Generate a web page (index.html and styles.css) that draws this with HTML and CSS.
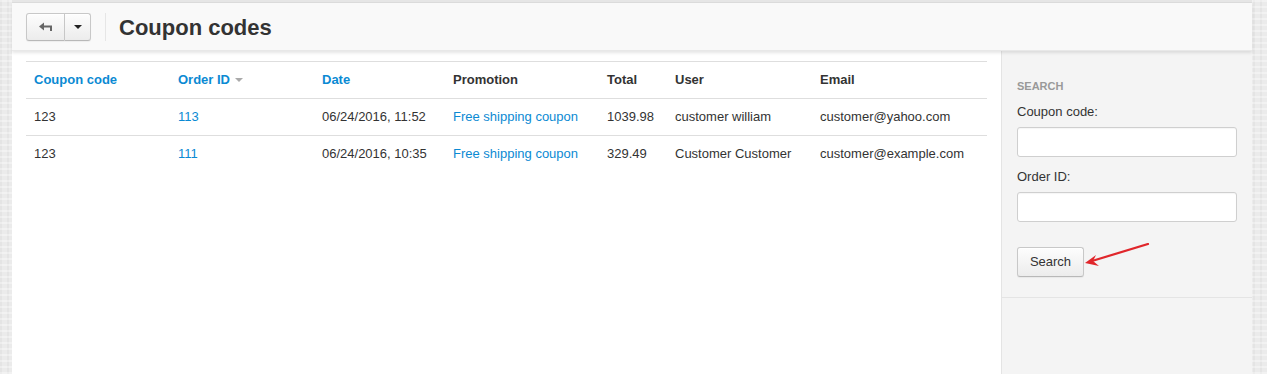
FILE: index.html
```html
<!DOCTYPE html>
<html>
<head>
<meta charset="utf-8">
<link rel="stylesheet" href="styles.css">
</head>
<body>
<div class="page">
  <div class="topstrip"></div>
  <div class="header">
    <div class="btn-group">
      <button class="btn btn-back" type="button">
        <svg width="14" height="10" viewBox="0 0 14 10"><path d="M0 4.5 L5 0.5 L5 3.5 L13 3.5 L13 9 L11 9 L11 5.5 L5 5.5 L5 8.5 Z" fill="#666"/></svg>
      </button>
      <button class="btn btn-caret" type="button"><span class="caret"></span></button>
    </div>
    <div class="vsep"></div>
    <h1 class="title">Coupon codes</h1>
  </div>
  <div class="body">
    <div class="main">
      <table class="table">
        <thead>
          <tr>
            <th class="c1"><a href="#">Coupon code</a></th>
            <th class="c2"><a href="#">Order ID</a><span class="sort"></span></th>
            <th class="c3"><a href="#">Date</a></th>
            <th class="c4">Promotion</th>
            <th class="c5">Total</th>
            <th class="c6">User</th>
            <th class="c7">Email</th>
          </tr>
        </thead>
        <tbody>
          <tr>
            <td>123</td>
            <td><a href="#">113</a></td>
            <td>06/24/2016, 11:52</td>
            <td><a href="#">Free shipping coupon</a></td>
            <td>1039.98</td>
            <td>customer william</td>
            <td>customer@yahoo.com</td>
          </tr>
          <tr class="last">
            <td>123</td>
            <td><a href="#">111</a></td>
            <td>06/24/2016, 10:35</td>
            <td><a href="#">Free shipping coupon</a></td>
            <td>329.49</td>
            <td>Customer Customer</td>
            <td>customer@example.com</td>
          </tr>
        </tbody>
      </table>
    </div>
    <div class="sidebar">
      <div class="search">
        <div class="search-title">SEARCH</div>
        <label class="lbl">Coupon code:</label>
        <input class="inp" type="text">
        <label class="lbl">Order ID:</label>
        <input class="inp" type="text">
        <div class="btn-row">
          <button class="btn btn-search" type="button">Search</button>
          <svg class="arrow" width="70" height="26" viewBox="0 0 70 26">
            <path d="M64 1 L8 18" stroke="#e0262b" stroke-width="2.2" fill="none" stroke-linecap="round"/>
            <path d="M1 20 L12 12 L9 18 L15 23 Z" fill="#e0262b"/>
          </svg>
        </div>
      </div>
    </div>
  </div>
</div>
</body>
</html>
```
FILE: styles.css
```css
html, body {
  margin: 0;
  padding: 0;
}
body {
  background-color: #ebebeb;
  background-image:
    repeating-linear-gradient(0deg, rgba(255,255,255,0.35) 0 2px, transparent 2px 6px),
    repeating-linear-gradient(90deg, rgba(0,0,0,0.03) 0 2px, transparent 2px 7px);
  font-family: "Liberation Sans", Arial, sans-serif;
  font-size: 13px;
  color: #333;
  height: 374px;
  overflow: hidden;
}
.page {
  margin-left: 12px;
  width: 1240px;
  height: 374px;
  background: #fff;
  display: flex;
  flex-direction: column;
}
.topstrip {
  height: 3px;
  background: #e6e6e6;
  border-bottom: 1px solid #dcdcdc;
  box-sizing: border-box;
}
.header {
  height: 48px;
  background: #f9f9f9;
  display: flex;
  align-items: center;
  padding-left: 14px;
  box-shadow: 0 2px 3px rgba(0,0,0,0.1);
  position: relative;
  z-index: 1;
  box-sizing: border-box;
  border-bottom: 1px solid #e8e8e8;
}
.btn-group {
  display: flex;
  margin-top: 1px;
}
.btn {
  font-family: "Liberation Sans", Arial, sans-serif;
  font-size: 13px;
  color: #333;
  background: linear-gradient(#fdfdfd, #ececec);
  border: 1px solid #c8c8c8;
  border-bottom-color: #b8b8b8;
  border-radius: 3px;
  box-shadow: inset 0 1px 0 #fff, 0 1px 1px rgba(0,0,0,0.05);
  cursor: pointer;
  padding: 0;
}
.btn-back {
  width: 39px;
  height: 28px;
  border-radius: 3px 0 0 3px;
  display: flex;
  align-items: center;
  justify-content: center;
}
.btn-caret {
  width: 26px;
  height: 28px;
  border-left: none;
  border-radius: 0 3px 3px 0;
  display: flex;
  align-items: center;
  justify-content: center;
}
.caret {
  width: 0;
  height: 0;
  border-left: 4px solid transparent;
  border-right: 4px solid transparent;
  border-top: 4px solid #222;
}
.vsep {
  width: 1px;
  height: 28px;
  background: #e6e6e6;
  margin-left: 14px;
  margin-right: 13px;
}
.title {
  margin: 0;
  font-size: 22px;
  font-weight: bold;
  color: #333;
  line-height: 28px;
  margin-top: 2px;
}
.body {
  flex: 1;
  display: flex;
}
.main {
  width: 989px;
  padding: 10px 14px 0 14px;
  box-sizing: border-box;
}
.table {
  width: 961px;
  border-collapse: collapse;
  border-top: 1px solid #dedede;
}
.table th, .table td {
  text-align: left;
  padding: 0 8px 2px 8px;
  height: 34px;
  border-bottom: 1px solid #dedede;
  white-space: nowrap;
}
.table tr.last td {
  border-bottom: none;
}
.table th {
  font-weight: bold;
}
.table a {
  color: #0b8ad3;
  text-decoration: none;
}
.c1 { width: 128px; }
.c2 { width: 128px; }
.c3 { width: 115px; }
.c4 { width: 138px; }
.c5 { width: 52px; }
.c6 { width: 129px; }
.sort {
  display: inline-block;
  width: 0;
  height: 0;
  border-left: 4px solid transparent;
  border-right: 4px solid transparent;
  border-top: 4px solid #aaa;
  margin-left: 5px;
  vertical-align: middle;
}
.sidebar {
  width: 251px;
  background: #f4f4f4;
  border-left: 1px solid #e4e4e4;
  box-sizing: border-box;
}
.search {
  padding: 28px 15px 20px 15px;
  border-bottom: 1px solid #e4e4e4;
  display: flex;
  flex-direction: column;
}
.search-title {
  font-size: 11px;
  font-weight: bold;
  color: #999;
  margin-bottom: 11px;
  line-height: 14px;
}
.lbl {
  display: block;
  line-height: 16px;
  margin-bottom: 7px;
}
.inp {
  width: 220px;
  height: 30px;
  box-sizing: border-box;
  border: 1px solid #cfcfcf;
  border-radius: 3px;
  background: #fff;
  margin: 0 0 12px 0;
  box-shadow: inset 0 1px 1px rgba(0,0,0,0.04);
}
.btn-row {
  display: flex;
  align-items: flex-start;
  margin-top: 13px;
}
.btn-search {
  width: 67px;
  height: 30px;
  padding-bottom: 2px;
}
.arrow {
  margin-left: 0;
  margin-top: -4px;
}
```
